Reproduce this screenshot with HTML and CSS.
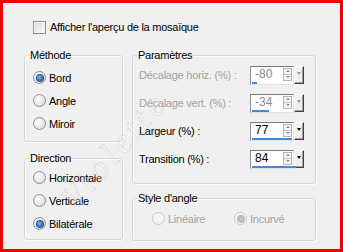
FILE: index.html
```html
<!DOCTYPE html>
<html lang="fr">
<head>
<meta charset="utf-8">
<title>Mosaïque</title>
<link rel="stylesheet" href="styles.css">
</head>
<body>
<div class="frame">
  <div class="check-row"><span class="checkbox"></span><span>Afficher l'aperçu de la mosaïque</span></div>
  <div class="columns">
    <div class="col-left">
      <fieldset class="group g-methode">
        <legend>Méthode</legend>
        <div class="radio-list">
          <div class="radio-row"><span class="radio checked"></span><span>Bord</span></div>
          <div class="radio-row"><span class="radio"></span><span>Angle</span></div>
          <div class="radio-row"><span class="radio"></span><span>Miroir</span></div>
        </div>
      </fieldset>
      <fieldset class="group g-direction">
        <legend>Direction</legend>
        <div class="radio-list">
          <div class="radio-row"><span class="radio"></span><span>Horizontale</span></div>
          <div class="radio-row"><span class="radio"></span><span>Verticale</span></div>
          <div class="radio-row"><span class="radio checked"></span><span>Bilatérale</span></div>
        </div>
      </fieldset>
    </div>
    <div class="col-right">
      <fieldset class="group g-params">
        <legend>Paramètres</legend>
        <div class="prow disabled">
          <span class="plabel">Décalage horiz. (%) :</span>
          <div class="spin">
            <div class="field"><span class="num">-80</span><span class="arrows"><span class="arr up"></span><span class="arr down"></span></span><span class="bar" style="width:5px"></span></div>
            <span class="drop"></span>
          </div>
        </div>
        <div class="prow disabled">
          <span class="plabel">Décalage vert. (%) :</span>
          <div class="spin">
            <div class="field"><span class="num">-34</span><span class="arrows"><span class="arr up"></span><span class="arr down"></span></span><span class="bar" style="width:17px"></span></div>
            <span class="drop"></span>
          </div>
        </div>
        <div class="prow">
          <span class="plabel">Largeur (%) :</span>
          <div class="spin">
            <div class="field"><span class="num">77</span><span class="arrows"><span class="arr up"></span><span class="arr down"></span></span><span class="bar" style="width:40px"></span></div>
            <span class="drop"></span>
          </div>
        </div>
        <div class="prow">
          <span class="plabel">Transition (%) :</span>
          <div class="spin">
            <div class="field"><span class="num">84</span><span class="arrows"><span class="arr up"></span><span class="arr down"></span></span><span class="bar" style="width:44px"></span></div>
            <span class="drop"></span>
          </div>
        </div>
      </fieldset>
      <fieldset class="group g-style">
        <legend>Style d'angle</legend>
        <div class="style-row">
          <div class="radio-row disabled"><span class="radio"></span><span>Linéaire</span></div>
          <div class="radio-row disabled"><span class="radio checked"></span><span>Incurvé</span></div>
        </div>
      </fieldset>
    </div>
  </div>
  <div class="watermark">Violette</div>
</div>
</body>
</html>
```
FILE: styles.css
```css
html, body {
  margin: 0;
  padding: 0;
}
body {
  width: 343px;
  height: 252px;
  background: #f0f0f0;
  font-family: "Liberation Sans", Arial, sans-serif;
  font-size: 11px;
  letter-spacing: -0.25px;
  color: #000;
}
.frame {
  box-sizing: border-box;
  width: 343px;
  height: 252px;
  border: 3px solid #f40000;
  padding: 18px 0 0 21px;
  position: relative;
  overflow: hidden;
}
.check-row {
  display: flex;
  align-items: center;
  gap: 4px;
  margin-left: 9px;
  height: 13px;
  line-height: 13px;
}
.checkbox {
  box-sizing: border-box;
  width: 13px;
  height: 13px;
  border: 1px solid #8e8f8f;
  background: linear-gradient(135deg, #d9d9d9, #fbfbfb);
  box-shadow: inset 0 0 0 1px #f2f2f2;
}
.columns {
  display: flex;
  align-items: flex-start;
  gap: 9px;
  margin-top: 14px;
}
.col-left {
  width: 99px;
  display: flex;
  flex-direction: column;
}
.col-right {
  width: 184px;
  display: flex;
  flex-direction: column;
}
.group {
  flex: none;
  margin: 0;
  padding: 0 6px;
  min-width: 0;
  border: 1px solid #d6d9dc;
  border-radius: 3px;
  box-shadow: inset 1px 1px 0 #fcfcfc, 1px 1px 0 #fcfcfc;
}
.group legend {
  padding: 0 1px;
  margin-left: -2px;
  line-height: 14px;
}
.g-methode .radio-list {
  padding: 4px 0 6px 2px;
}
.g-direction {
  margin-top: 9px;
}
.g-direction .radio-list {
  padding: 1px 0 4px 2px;
}
.radio-row {
  display: flex;
  align-items: center;
  gap: 3px;
  height: 23px;
}
.radio {
  box-sizing: border-box;
  width: 13px;
  height: 13px;
  border-radius: 50%;
  border: 1px solid #8e8f8f;
  background: radial-gradient(circle at 35% 35%, #ffffff 0%, #e8e8e8 55%, #d2d2d2 100%);
  display: flex;
  align-items: center;
  justify-content: center;
}
.radio.checked::after {
  content: "";
  width: 6px;
  height: 6px;
  border-radius: 50%;
  background: radial-gradient(circle at 40% 40%, #7fc0f2 0%, #2a6fb8 55%, #0f3e72 100%);
  box-shadow: 0 0 0 1px #1c4f85;
}
.radio-row.disabled {
  color: #a2a2a2;
}
.radio-row.disabled .radio {
  border-color: #c8c8c8;
  background: #f4f4f4;
}
.radio-row.disabled .radio.checked::after {
  background: radial-gradient(circle, #c9c9c9 0%, #a9a9a9 100%);
  box-shadow: 0 0 0 1px #b4b4b4;
}
.g-params {
  padding-bottom: 10px;
}
.g-params legend {
  margin-bottom: -1px;
}
.prow {
  display: flex;
  align-items: center;
  height: 28px;
}
.prow.disabled .plabel {
  color: #a2a2a2;
}
.prow.disabled .num {
  color: #8a8a8a;
}
.prow.disabled .drop::after {
  border-top-color: #9a9a9a;
}
.plabel {
  width: 111px;
  flex: none;
}
.spin {
  display: flex;
  align-items: flex-start;
  height: 19px;
}
.field {
  box-sizing: border-box;
  position: relative;
  width: 44px;
  height: 19px;
  background: #fff;
  border-top: 1px solid #7b7b7b;
  border-left: 1px solid #8f8f8f;
  border-right: 1px solid #e3e3e3;
  border-bottom: 1px solid #e3e3e3;
  display: flex;
  align-items: center;
  padding: 0 1px 2px 4px;
}
.num {
  flex: 1;
  font-size: 12px;
  letter-spacing: 0;
}
.arrows {
  display: flex;
  flex-direction: column;
  width: 9px;
  height: 13px;
  border: 1px solid #b5b5b5;
  box-sizing: border-box;
  background: #f3f3f3;
}
.arr {
  flex: 1;
  display: flex;
  align-items: center;
  justify-content: center;
}
.arr.up {
  border-bottom: 1px solid #c4c4c4;
}
.arr.up::after {
  content: "";
  border-left: 2px solid transparent;
  border-right: 2px solid transparent;
  border-bottom: 2px solid #8a8a8a;
}
.arr.down::after {
  content: "";
  border-left: 2px solid transparent;
  border-right: 2px solid transparent;
  border-top: 2px solid #8a8a8a;
}
.bar {
  position: absolute;
  left: 1px;
  bottom: 0;
  height: 2px;
  background: #3d8bdc;
}
.drop {
  box-sizing: border-box;
  width: 10px;
  height: 18px;
  background: #efefef;
  border-top: 1px solid #fff;
  border-left: 1px solid #fff;
  border-right: 1px solid #404040;
  border-bottom: 1px solid #404040;
  box-shadow: inset -1px -1px 0 #a0a0a0;
  display: flex;
  align-items: center;
  justify-content: center;
}
.drop::after {
  content: "";
  border-left: 2px solid transparent;
  border-right: 2px solid transparent;
  border-top: 3px solid #000;
  margin-top: -2px;
}
.g-style {
  margin-top: 7px;
  padding-bottom: 10px;
}
.style-row {
  display: flex;
  padding: 2px 0 0 13px;
}
.style-row .radio-row:first-child {
  width: 82px;
}
.watermark {
  position: absolute;
  left: 40px;
  top: 128px;
  transform: rotate(-49deg);
  font-family: "Liberation Serif", serif;
  font-style: italic;
  font-size: 34px;
  color: rgba(255, 255, 255, 0.3);
  -webkit-text-stroke: 0.6px rgba(160, 160, 160, 0.35);
  letter-spacing: 5px;
  pointer-events: none;
}
```
